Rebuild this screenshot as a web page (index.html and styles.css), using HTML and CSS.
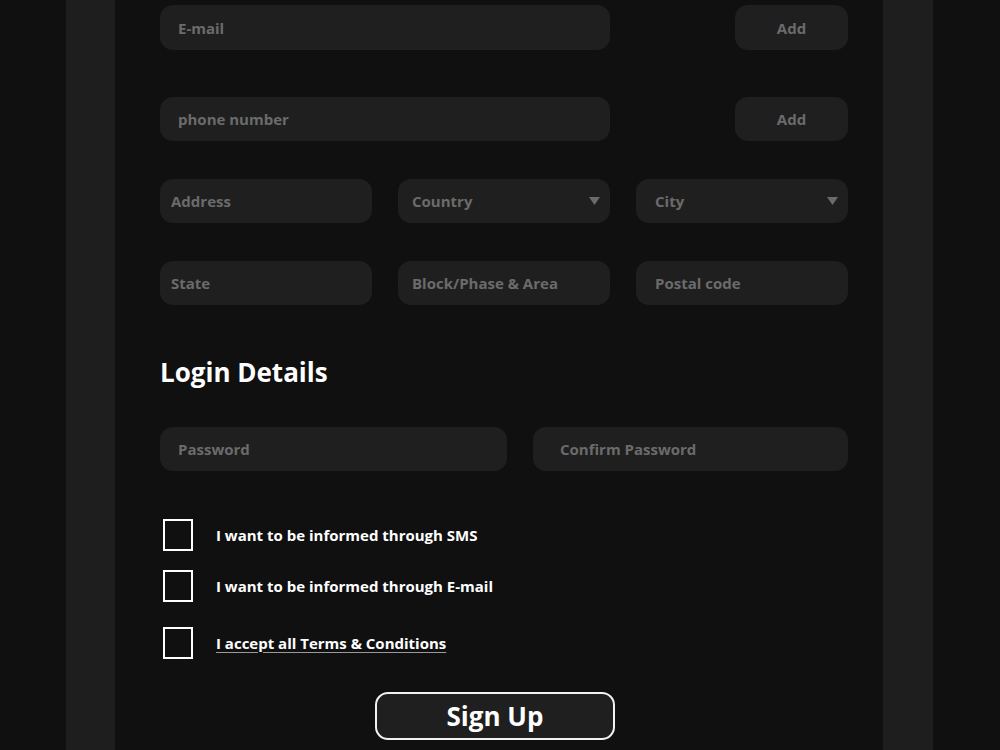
FILE: index.html
```html
<!DOCTYPE html>
<html>
<head>
    <title>Sign Up</title>
    <link rel="stylesheet" href="styles.css">
</head>
<body>
    <div class="frame">
        <div class="panel">
            <form class="content" id="signupForm">
                <div class="row row-add">
                    <input type="email" class="field field-wide" placeholder="E-mail">
                    <button type="button" class="field add-btn">Add</button>
                </div>
                <div class="row row-add">
                    <input type="tel" class="field field-wide" placeholder="phone number">
                    <button type="button" class="field add-btn">Add</button>
                </div>
                <div class="row row-three">
                    <input type="text" class="field pad-a" placeholder="Address">
                    <div class="field select-box pad-b">
                        <select>
                            <option>Country</option>
                        </select>
                        <svg class="caret" width="11" height="8" viewBox="0 0 11 8"><path d="M0 0h11L5.5 8z" fill="#6b6b6b"/></svg>
                    </div>
                    <div class="field select-box pad-c">
                        <select>
                            <option>City</option>
                        </select>
                        <svg class="caret" width="11" height="8" viewBox="0 0 11 8"><path d="M0 0h11L5.5 8z" fill="#6b6b6b"/></svg>
                    </div>
                </div>
                <div class="row row-three">
                    <input type="text" class="field pad-a" placeholder="State">
                    <input type="text" class="field pad-b" placeholder="Block/Phase &amp; Area">
                    <input type="text" class="field pad-c" placeholder="Postal code">
                </div>

                <h2>Login Details</h2>

                <div class="row row-pass">
                    <input type="password" class="field" placeholder="Password">
                    <input type="password" class="field pad-confirm" placeholder="Confirm Password">
                </div>

                <div class="checks">
                    <label class="check">
                        <input type="checkbox">
                        <span>I want to be informed through SMS</span>
                    </label>
                    <label class="check">
                        <input type="checkbox">
                        <span>I want to be informed through E-mail</span>
                    </label>
                    <label class="check check-terms">
                        <input type="checkbox">
                        <a href="#">I accept all Terms &amp; Conditions</a>
                    </label>
                </div>

                <div class="submit-row">
                    <button type="submit" class="signup-btn">Sign Up</button>
                </div>
            </form>
        </div>
    </div>
</body>
</html>
```

FILE: styles.css
```css
* {
    box-sizing: border-box;
}
body {
    margin: 0;
    background-color: #101010;
    font-family: "Open Sans", Arial, sans-serif;
    font-weight: 700;
}
.frame {
    padding: 0 67px 0 66px;
}
.panel {
    background-color: #1e1e1e;
    padding: 0 50px 0 49px;
}
.content {
    background-color: #101010;
    padding: 5px 35px 10px 45px;
    min-height: 750px;
}
.row {
    display: flex;
    height: 45px;
}
.row-add {
    justify-content: space-between;
    margin-bottom: 47px;
}
.row-add + .row-add {
    height: 44px;
    margin-bottom: 38px;
}
.row-three {
    display: grid;
    grid-template-columns: repeat(3, minmax(0, 1fr));
    gap: 26px;
    height: 44px;
    margin-bottom: 38px;
}
.row-pass {
    display: grid;
    grid-template-columns: 347px minmax(0, 1fr);
    gap: 26px;
    height: 44px;
}
.field {
    min-width: 0;
    background-color: #1f1f1f;
    border: none;
    border-radius: 13px;
    color: #ddd;
    font-family: inherit;
    font-weight: 700;
    font-size: 15px;
    padding: 0 18px;
    outline: none;
}
.row-three .field,
.row-pass .field {
    width: 100%;
}
.field::placeholder {
    color: #6b6b6b;
}
.field-wide {
    width: 450px;
}
.add-btn {
    width: 113px;
    color: #6b6b6b;
    padding: 0;
    cursor: pointer;
}
.pad-a {
    padding-left: 11px;
}
.pad-b {
    padding-left: 14px;
}
.pad-c {
    padding-left: 19px;
}
.pad-confirm {
    padding-left: 27px;
}
.select-box {
    display: flex;
    align-items: center;
    padding-right: 10px;
}
.select-box select {
    flex: 1;
    min-width: 0;
    appearance: none;
    background: transparent;
    border: none;
    color: #6b6b6b;
    font-family: inherit;
    font-weight: 700;
    font-size: 15px;
    padding: 0;
    outline: none;
}
h2 {
    color: #fff;
    font-size: 26px;
    line-height: 36px;
    margin: 49px 0 37px 0;
}
.checks {
    margin-top: 48px;
}
.check {
    display: flex;
    align-items: center;
    gap: 23px;
    color: #fff;
    font-size: 15px;
    margin-left: 3px;
    margin-bottom: 19px;
}
.check-terms {
    margin-top: 25px;
    margin-bottom: 0;
}
.check input {
    appearance: none;
    width: 30px;
    height: 32px;
    margin: 0;
    border: 2px solid #fff;
    background: transparent;
}
.check a {
    color: #fff;
    text-decoration: underline;
    text-decoration-color: #9a9a9a;
    text-underline-offset: 3px;
}
.submit-row {
    display: flex;
    justify-content: center;
    margin-top: 33px;
    padding-right: 18px;
}
.signup-btn {
    width: 240px;
    height: 48px;
    background-color: #1f1f1f;
    border: 2px solid #f2f2f2;
    border-radius: 13px;
    color: #fff;
    font-family: inherit;
    font-weight: 700;
    font-size: 26px;
    cursor: pointer;
}
```
